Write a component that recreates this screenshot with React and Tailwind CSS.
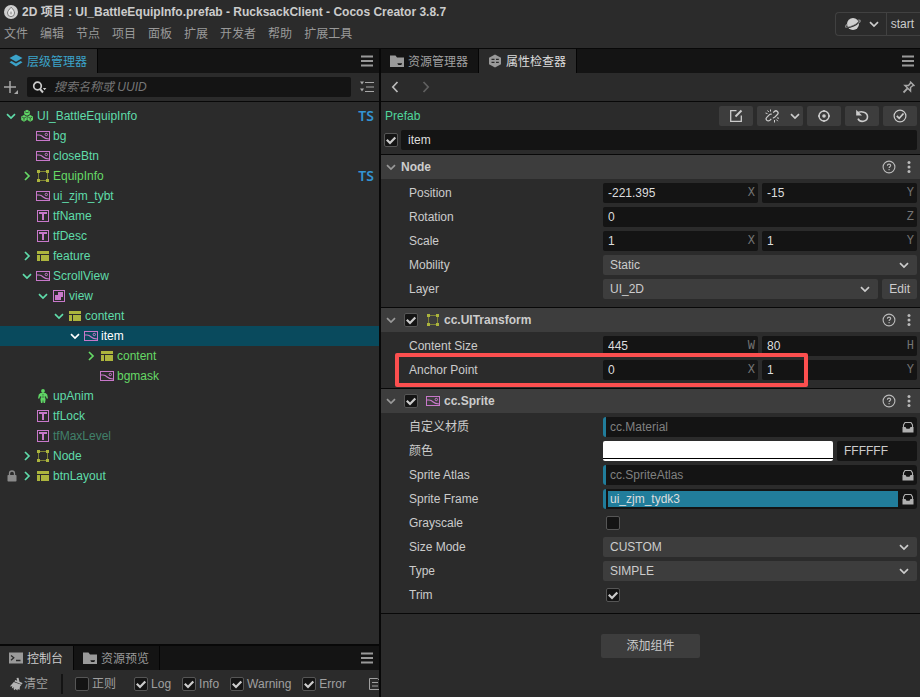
import React, { useState } from 'react';

const FONT = "font-['Liberation_Sans','Noto_Sans_CJK_SC',sans-serif]";

/* ---------- icons ---------- */

const Icon = ({ w = 14, h = 14, className = '', children }) => (
  <svg width={w} height={h} viewBox={`0 0 ${w} ${h}`} fill="none" className={`shrink-0 ${className}`} aria-hidden="true">
    {children}
  </svg>
);

const Chevron = ({ dir = 'down', className = '' }) => (
  <Icon className={className}>
    <path
      d={dir === 'down' ? 'M3 5.2 7 9 11 5.2' : dir === 'right' ? 'M5 3 9 7 5 11' : 'M9.5 2 4.8 7 9.5 12'}
      stroke="currentColor"
      strokeWidth="1.7"
    />
  </Icon>
);

const MenuIcon = () => (
  <Icon w={12} h={12}>
    <path d="M0 1.500h12M0 6h12M0 10.500h12" stroke="currentColor" strokeWidth="1.800" />
  </Icon>
);

const SpriteIcon = () => (
  <Icon className="text-[#c878ca]">
    <rect x=".5" y="2.500" width="13" height="9" stroke="currentColor" />
    <path d="M1 6h2c2.200 0 2.800.6 4.200 2s3 1.900 5.800 2" stroke="currentColor" strokeWidth="1.100" />
    <circle cx="10.300" cy="5.500" r="1.200" stroke="currentColor" />
  </Icon>
);

const LabelIcon = () => (
  <Icon className="text-[#c878ca]">
    <rect x="1.500" y="1.500" width="11" height="11" stroke="currentColor" />
    <path d="M3 4h8M7 4v7" stroke="currentColor" strokeWidth="2" />
  </Icon>
);

const TransformIcon = () => (
  <Icon className="text-[#acb53d]">
    <rect x="2.500" y="2.500" width="9" height="9" stroke="#7d8235" />
    <path d="M1 1h3v3H1zM10 1h3v3h-3zM1 10h3v3H1zM10 10h3v3h-3z" fill="currentColor" />
  </Icon>
);

const LayoutIcon = () => (
  <Icon className="text-[#acb53d]">
    <path d="M1 2h12v3H1zM1 6h3v6H1zM5 6h8v6H5z" fill="currentColor" />
  </Icon>
);

const MaskIcon = () => (
  <Icon className="text-[#c878ca]">
    <rect x="1.500" y="1.500" width="11" height="11" stroke="currentColor" />
    <path d="M6 3h5v5H9v3H3V6h3z" fill="currentColor" />
  </Icon>
);

const PrefabIcon = () => (
  <Icon className="text-[#5fd765]">
    <path d="m7 .8 2.800 1.500v3L7 6.800 4.200 5.300v-3z" fill="currentColor" />
    <path d="m4 6 2.800 1.500v3.500L4 12.800 1.200 11V7.500z" fill="currentColor" />
    <path d="m10.200 6 2.800 1.500v3.500l-2.800 1.800L7.400 11V7.500z" fill="currentColor" />
    <path d="m2 8 2 1.100L6 8M4 9.100v2.500M8.200 8l2 1.100 2-1.100M10.200 9.100v2.500M5 2.800l2 1 2-1" stroke="#2b2b2b" strokeWidth=".7" />
  </Icon>
);

const AnimIcon = () => (
  <Icon className="text-[#5fd765]">
    <circle cx="7" cy="2" r="1.900" fill="currentColor" />
    <path d="M4.500 4h5l1.700 1.500L12 9.500h-1.400L9.800 7 9 8l.6 2.500L9 14H7.600L7 10.500 6.400 14H5l-.6-3.500L5 8l-.8-1-.8 2.500H2l.8-4z" fill="currentColor" />
    <path d="M7 5v1.500M5.500 8h3" stroke="#2b2b2b" strokeWidth=".6" />
  </Icon>
);

const LockIcon = () => (
  <Icon w={10} h={12} className="text-[#8a8a8a]">
    <rect x=".5" y="5" width="9" height="6.500" rx=".8" fill="currentColor" />
    <path d="M2.500 5.500V3.500a2.500 2.500 0 0 1 5 0v2" stroke="currentColor" strokeWidth="1.300" />
  </Icon>
);

const LayersIcon = () => (
  <Icon>
    <path d="m7 .5 6.500 3.600L7 7.700.5 4.100z" fill="currentColor" />
    <path d="M2.500 7 .5 8.300 7 12.500l6.500-4.200L11.500 7 7 9.600z" fill="currentColor" />
  </Icon>
);

const FolderIcon = () => (
  <Icon className="text-[#9a9a9a]">
    <path d="M0 1.500h5.500L7 3.500h7V13H0z" fill="currentColor" />
    <path d="M7.500 9.200h4.500v.8l-1 1H8.500l-1-1z" fill="#141414" />
  </Icon>
);

const HexIcon = () => (
  <Icon>
    <path d="m7 .5 6 3.300v6.400l-6 3.300-6-3.300V3.800z" fill="#9a9a9a" />
    <path d="M3.500 5.300h3M8 5.300h2.800M3.500 8.300h3M8 8.300h2.800" stroke="#2b2b2b" strokeWidth="1.300" />
  </Icon>
);

const ConsoleIcon = () => (
  <Icon>
    <path d="M0 1.500h14v11H0z" fill="#9a9a9a" />
    <path d="m2 4.500 2.800 2.300L2 9.200M7 9.500h4.500" stroke="#2b2b2b" strokeWidth="1.300" />
  </Icon>
);

const CocosIcon = () => (
  <Icon>
    <circle cx="7" cy="7" r="7" fill="#cfcfcf" />
    <path d="M7.200 2.200c2 2.300 3.300 3.900 3.300 5.800A3.500 3.500 0 0 1 7 11.600 3.500 3.500 0 0 1 3.500 8c0-1.800 1.700-3.600 3.700-5.800z" stroke="#777" strokeWidth="1" fill="#e8e8e8" />
    <path d="M7 6c1 1.100 1.300 1.600 1.300 2.300a1.300 1.300 0 0 1-2.600 0C5.700 7.600 6.200 7 7 6z" fill="#b0b0b0" />
  </Icon>
);

const PlanetIcon = () => (
  <Icon w={16} h={14} className="text-[#d0d0d0]">
    <circle cx="8" cy="7" r="6" fill="currentColor" />
    <path d="M2 10.800C6 10.600 11.500 8 14 5" stroke="#2b2b2b" strokeWidth="1.300" />
    <path d="M2.200 7.300C.3 8.800 0 10.300 1.600 10.400M13.200 3.200c2.600-.3 2.600 1 .8 2.600" stroke="#8a8a8a" strokeWidth="1.200" />
    <path d="M1.500 10.300C5.500 10 11.500 7.300 14.200 4.600" stroke="#8a8a8a" strokeWidth=".6" />
  </Icon>
);

const HelpIcon = () => (
  <Icon>
    <circle cx="7" cy="7" r="5.900" stroke="currentColor" strokeWidth="1.100" />
    <path d="M5.400 5.700c0-2.100 3.300-2.100 3.300-.1 0 1.200-1.600 1.200-1.600 2.500M7.100 9v1.200" stroke="currentColor" strokeWidth="1.100" />
  </Icon>
);

const DotsIcon = () => (
  <Icon w={4} h={14}>
    <circle cx="2" cy="2.500" r="1.500" fill="currentColor" />
    <circle cx="2" cy="7" r="1.500" fill="currentColor" />
    <circle cx="2" cy="11.500" r="1.500" fill="currentColor" />
  </Icon>
);

const PinIcon = () => (
  <Icon>
    <path d="m8 1.500 4.500 4.500M9 2.500 6.500 5.500 3 5.500l5.500 5.500V7.500L11.500 5" stroke="currentColor" strokeWidth="1.500" />
    <path d="M5.800 8.200 1.500 12.500" stroke="currentColor" strokeWidth="1.800" />
  </Icon>
);

const AssetIcon = () => (
  <Icon w={12} h={12} className="text-[#b0b0b0]">
    <path d="M1.500 6.500v-2.500L3 1.500h6l1.500 2.500v2.500" stroke="currentColor" strokeWidth="1.100" />
    <path d="M.5 6h3l1 1.800h3l1-1.800h3v5.500H.5z" fill="currentColor" />
  </Icon>
);

const EditIcon = () => (
  <Icon>
    <path d="M7.500 1.700H1.700v10.600h10.600V6.500" stroke="currentColor" strokeWidth="1.300" />
    <path d="m6.500 7.500 6-6" stroke="currentColor" strokeWidth="2" />
  </Icon>
);

const UnlinkIcon = () => (
  <Icon>
    <path d="m6.300 9.800-1.500 1.500a2.100 2.100 0 0 1-3-3L4.500 5.600a2 2 0 0 1 2.300-.3M8.200 3.700l1.200-1.200a2.100 2.100 0 0 1 3 3L9.800 8.200a2 2 0 0 1-2 .5" stroke="currentColor" strokeWidth="1.200" />
    <path d="M2.500 1.500 3.800 3M5.500.5v2M.5 4l2 .6M9.500 11v2.500M11.300 10.500l1.500 1.700M12 8.800l2 .5" stroke="currentColor" />
  </Icon>
);

const TargetIcon = () => (
  <Icon>
    <circle cx="7" cy="7" r="5" stroke="currentColor" strokeWidth="1.400" />
    <circle cx="7" cy="7" r="1.800" fill="currentColor" />
    <path d="M7 1v2M7 11v2M1 7h2M11 7h2" stroke="currentColor" strokeWidth="1.500" />
  </Icon>
);

const ResetIcon = () => (
  <Icon>
    <path d="M2 4.200c4-2.800 10.500-1 10.500 3.600 0 5-7.500 6.300-9.500 1.900" stroke="currentColor" strokeWidth="1.600" />
    <path d="M1.200.8v5.700H7z" fill="currentColor" />
  </Icon>
);

const ApplyIcon = () => (
  <Icon>
    <circle cx="7" cy="7" r="5.900" stroke="currentColor" strokeWidth="1.200" />
    <path d="m3.800 6.800 2.400 2.500 4.300-4.800" stroke="currentColor" strokeWidth="1.700" />
  </Icon>
);

const BroomIcon = () => (
  <Icon className="text-[#b5b5b5]">
    <path d="M7.500 1 9.500.7l1 4 3 1.200-.6 1.500L5.500 4.500l.7-1.500 2 .7z" fill="currentColor" />
    <path d="m4.800 5 7.600 2.800-1.400 1.600-.5 3.600-1.600-1-.6 1.600-1.700-1.500-1 1.200L4.500 12l.6-1.700-2.300 1.200.5-2.200L.8 9.500z" fill="currentColor" />
  </Icon>
);

/* ---------- shared controls ---------- */

function Checkbox({ id, label, defaultChecked = false }) {
  return (
    <span className="relative flex size-[14px] shrink-0">
      <input
        id={id}
        type="checkbox"
        aria-label={label}
        defaultChecked={defaultChecked}
        className="peer size-[14px] appearance-none rounded-[2px] border border-[#565656] bg-[#141414]"
      />
      <svg viewBox="0 0 14 14" fill="none" className="pointer-events-none absolute inset-0 hidden text-[#cccccc] peer-checked:block">
        <path d="m2.800 6.800 3.200 3.200L11.300 4.500" stroke="currentColor" strokeWidth="2.200" />
      </svg>
    </span>
  );
}

function Tab({ icon, active = false, className = '', children }) {
  return (
    <button
      type="button"
      className={`flex h-6 items-center gap-1 border-r border-[#050505] pr-[10px] pl-[9px] whitespace-nowrap ${active ? 'bg-[#2b2b2b]' : 'bg-[#141414]'} ${className}`}
    >
      {icon}
      <span className="pt-px">{children}</span>
    </button>
  );
}

function TabBar({ children }) {
  return (
    <div className="flex h-6 shrink-0 items-center bg-[#141414]">
      {children}
      <button type="button" aria-label="Panel menu" className="mr-[6px] ml-auto text-[#999999]">
        <MenuIcon />
      </button>
    </div>
  );
}

function Field({ label, value, axis }) {
  return (
    <div className="flex h-5 min-w-0 flex-1 items-center rounded-[2px] bg-[#141414] pr-[3px]">
      <input aria-label={label} defaultValue={value} className="w-0 min-w-0 flex-1 bg-transparent pl-[5px] text-[#dddddd] outline-none" />
      <span className="font-['Liberation_Mono',monospace] text-[#757575]">{axis}</span>
    </div>
  );
}

function Select({ id, options }) {
  return (
    <div className="relative min-w-0 flex-1">
      <select id={id} className="block h-5 w-full appearance-none rounded-[2px] bg-[#3d3d3d] pr-6 pl-[7px] text-[#cccccc] outline-none">
        {options.map(o => <option key={o}>{o}</option>)}
      </select>
      <Chevron className="pointer-events-none absolute top-[3px] right-[6px] text-[#cccccc]" />
    </div>
  );
}

function AssetField({ id, type, value }) {
  return (
    <div className="flex h-5 min-w-0 flex-1 items-center rounded-[3px] border-l-3 border-[#217d9b] bg-[#141414] pr-[3px] pl-[2px]">
      <input
        id={id}
        readOnly
        defaultValue={value}
        placeholder={type}
        className={`h-4 min-w-0 flex-1 px-[2px] outline-none placeholder:text-[#808080] ${value ? 'bg-[#217d9b] text-[#dddddd]' : 'bg-transparent'}`}
      />
      <button type="button" aria-label={`Select ${type}`} className="ml-1">
        <AssetIcon />
      </button>
    </div>
  );
}

function Row({ label, htmlFor, highlighted = false, children }) {
  return (
    <div className="relative grid h-5 grid-cols-[194fr_314fr] items-center pr-[3px] pl-7">
      {htmlFor ? <label htmlFor={htmlFor}>{label}</label> : <span>{label}</span>}
      <div className="flex min-w-0 items-center gap-1">{children}</div>
      {highlighted && (
        <div className="pointer-events-none absolute -inset-y-[7px] right-28 left-[14px] rounded-[2px] border-4 border-[#fc4f4f]" />
      )}
    </div>
  );
}

function Section({ title, icon, toggle = false, children }) {
  const [open, setOpen] = useState(true);
  return (
    <section className="border-b border-[#080808]">
      <header className="flex h-6 items-center bg-[#3d3d3d] pr-[9px] pl-[3px]">
        <button type="button" aria-label={`Toggle ${title}`} onClick={() => setOpen(!open)} className="mr-[3px] text-[#999999]">
          <Chevron dir={open ? 'down' : 'right'} />
        </button>
        {toggle && (
          <div className="mr-1 ml-[3px] flex items-center gap-2">
            <Checkbox label={`Enable ${title}`} defaultChecked />
            {icon}
          </div>
        )}
        <h2 className="font-bold">{title}</h2>
        <div className="ml-auto flex items-center gap-[11px] text-[#bbbbbb]">
          <button type="button" aria-label="Help"><HelpIcon /></button>
          <button type="button" aria-label="More"><DotsIcon /></button>
        </div>
      </header>
      {open && <div className="flex flex-col gap-1 pt-1 pb-2">{children}</div>}
    </section>
  );
}

/* ---------- hierarchy ---------- */

const nodes = [
  { name: 'UI_BattleEquipInfo', level: 0, icon: PrefabIcon, arrow: 'down', ts: true },
  { name: 'bg', level: 1, icon: SpriteIcon },
  { name: 'closeBtn', level: 1, icon: SpriteIcon },
  { name: 'EquipInfo', level: 1, icon: TransformIcon, arrow: 'right', tone: 'green', ts: true },
  { name: 'ui_zjm_tybt', level: 1, icon: SpriteIcon },
  { name: 'tfName', level: 1, icon: LabelIcon },
  { name: 'tfDesc', level: 1, icon: LabelIcon },
  { name: 'feature', level: 1, icon: LayoutIcon, arrow: 'right' },
  { name: 'ScrollView', level: 1, icon: SpriteIcon, arrow: 'down' },
  { name: 'view', level: 2, icon: MaskIcon, arrow: 'down' },
  { name: 'content', level: 3, icon: LayoutIcon, arrow: 'down' },
  { name: 'item', level: 4, icon: SpriteIcon, arrow: 'down', tone: 'selected' },
  { name: 'content', level: 5, icon: LayoutIcon, arrow: 'right', tone: 'green' },
  { name: 'bgmask', level: 5, icon: SpriteIcon, tone: 'green' },
  { name: 'upAnim', level: 1, icon: AnimIcon },
  { name: 'tfLock', level: 1, icon: LabelIcon },
  { name: 'tfMaxLevel', level: 1, icon: LabelIcon, tone: 'dim' },
  { name: 'Node', level: 1, icon: TransformIcon, arrow: 'right' },
  { name: 'btnLayout', level: 1, icon: LayoutIcon, arrow: 'right', locked: true },
];

const tones = {
  teal: 'text-[#5fdcaa]',
  green: 'text-[#66d966]',
  dim: 'text-[#41806a]',
  selected: 'bg-[#094a5d] text-white',
};

function TreeRow({ node }) {
  const NodeIcon = node.icon;
  return (
    <li className={`flex h-5 items-center pr-[5px] pl-1 ${tones[node.tone || 'teal']}`}>
      {Array.from({ length: node.level }, (_, i) => (
        <span key={i} className="flex w-4 shrink-0 justify-center">
          {i === 0 && node.locked && <LockIcon />}
        </span>
      ))}
      <span className="mr-[2px] w-[14px] shrink-0">{node.arrow && <Chevron dir={node.arrow} />}</span>
      <NodeIcon />
      <span className="ml-[3px]">{node.name}</span>
      {node.ts && <span className="ml-auto font-['Noto_Sans',sans-serif] text-sm font-semibold text-[#3393d3]">TS</span>}
    </li>
  );
}

function Hierarchy() {
  return (
    <section className="flex min-h-0 flex-1 flex-col">
      <TabBar>
        <Tab active icon={<LayersIcon />} className="text-[#3ba3c9]">层级管理器</Tab>
      </TabBar>
      <div className="flex h-[29px] shrink-0 items-center border-b border-[#080808] pr-[5px] pl-1 text-[#a8a8a8]">
        <button type="button" aria-label="Create node">
          <Icon>
            <path d="M6 1v12M0 7h12" stroke="currentColor" strokeWidth="1.500" />
            <path d="M14 10v4h-4z" fill="currentColor" />
          </Icon>
        </button>
        <div className="mr-[9px] ml-[9px] flex h-5 min-w-0 flex-1 items-center rounded-[2px] bg-[#141414] pl-[5px]">
          <Icon w={16} className="text-[#cccccc]">
            <circle cx="5.500" cy="6" r="3.800" stroke="currentColor" strokeWidth="1.700" />
            <path d="m8 9 3 3.500" stroke="currentColor" strokeWidth="2" />
            <path d="M10.800 8h3.600L12.600 10.200z" fill="currentColor" />
          </Icon>
          <input
            aria-label="搜索"
            placeholder="搜索名称或 UUID"
            className="ml-[6px] min-w-0 flex-1 bg-transparent outline-none placeholder:text-[#767676] placeholder:italic"
          />
        </div>
        <button type="button" aria-label="Collapse all">
          <Icon>
            <path d="M5 2.500h9M6 7h8M5 11.500h9" stroke="currentColor" strokeWidth="1.200" />
            <path d="M0 1.500h4L2 4.500zM0 8.500h4l-2 3z" fill="currentColor" />
          </Icon>
        </button>
      </div>
      <ul className="min-h-0 flex-1 overflow-hidden pt-1">
        {nodes.map((n, i) => <TreeRow key={i} node={n} />)}
      </ul>
    </section>
  );
}

function Console() {
  return (
    <section className="shrink-0 border-t-2 border-[#080808]">
      <TabBar>
        <Tab active icon={<ConsoleIcon />} className="text-[#cccccc]">控制台</Tab>
        <Tab icon={<FolderIcon />} className="text-[#999999]">资源预览</Tab>
      </TabBar>
      <div className="flex h-[27px] items-center overflow-hidden pl-[9px] whitespace-nowrap text-[#a0a0a0]">
        <button type="button" className="flex items-center gap-[1px]">
          <BroomIcon />
          <span className="pt-px">清空</span>
        </button>
        <div className="mr-3 ml-[13px] h-5 w-[2px] shrink-0 bg-[#141414]" />
        <div className="mr-[18px] flex items-center gap-[3px]">
          <Checkbox id="regex" />
          <label htmlFor="regex">正则</label>
        </div>
        <div className="flex items-center gap-[11px]">
          {['Log', 'Info', 'Warning', 'Error'].map(name => (
            <div key={name} className="flex items-center gap-[3px]">
              <Checkbox id={name} defaultChecked />
              <label htmlFor={name}>{name}</label>
            </div>
          ))}
        </div>
        <button type="button" aria-label="Log file" className="ml-[22px] shrink-0">
          <Icon>
            <path d="M1.500 1.500h8L12.500 4v8.500h-11zM4 5.500h6M4 9h6" stroke="currentColor" />
          </Icon>
        </button>
      </div>
    </section>
  );
}

/* ---------- inspector ---------- */

const toolButton = 'flex h-5 w-[34px] items-center justify-center rounded-[2px] bg-[#3d3d3d]';

function Inspector() {
  return (
    <main className="flex min-h-0 min-w-0 flex-col border-l border-[#080808]">
      <TabBar>
        <Tab icon={<FolderIcon />} className="text-[#a0a0a0]">资源管理器</Tab>
        <Tab active icon={<HexIcon />} className="text-[#dddddd]">属性检查器</Tab>
      </TabBar>

      <div className="flex h-[29px] shrink-0 items-center border-b border-[#080808] pr-1 pl-[7px]">
        <button type="button" aria-label="Back" className="text-[#bbbbbb]"><Chevron dir="left" /></button>
        <button type="button" aria-label="Forward" disabled className="ml-[17px] text-[#606060]"><Chevron dir="left" className="rotate-180" /></button>
        <button type="button" aria-label="Pin" className="ml-auto text-[#a8a8a8]"><PinIcon /></button>
      </div>

      <div className="flex flex-col gap-1 border-b border-[#080808] pt-1 pr-[3px] pb-1 pl-[3px]">
        <div className="flex h-5 items-center gap-1 text-[#cccccc]">
          <span className="mr-auto pl-[1px] text-[#4fd69c]">Prefab</span>
          <button type="button" aria-label="Edit prefab" className={toolButton}><EditIcon /></button>
          <button type="button" aria-label="Unlink prefab" className="flex h-5 w-[46px] items-center justify-between rounded-[2px] bg-[#3d3d3d] pr-[1px] pl-2">
            <UnlinkIcon />
            <Chevron />
          </button>
          <button type="button" aria-label="Locate" className={toolButton}><TargetIcon /></button>
          <button type="button" aria-label="Reset" className={toolButton}><ResetIcon /></button>
          <button type="button" aria-label="Apply" className={toolButton}><ApplyIcon /></button>
        </div>
        <div className="flex h-5 items-center gap-[3px]">
          <Checkbox label="Active" defaultChecked />
          <input aria-label="Node name" defaultValue="item" className="h-5 min-w-0 flex-1 rounded-[2px] bg-[#141414] px-[7px] text-[#dddddd] outline-none" />
        </div>
      </div>

      <Section title="Node">
        <Row label="Position">
          <Field label="Position X" value="-221.395" axis="X" />
          <Field label="Position Y" value="-15" axis="Y" />
        </Row>
        <Row label="Rotation">
          <Field label="Rotation Z" value="0" axis="Z" />
        </Row>
        <Row label="Scale">
          <Field label="Scale X" value="1" axis="X" />
          <Field label="Scale Y" value="1" axis="Y" />
        </Row>
        <Row label="Mobility" htmlFor="mobility">
          <Select id="mobility" options={['Static']} />
        </Row>
        <Row label="Layer" htmlFor="layer">
          <Select id="layer" options={['UI_2D']} />
          <button type="button" className="h-5 rounded-[2px] bg-[#3d3d3d] px-[7px]">Edit</button>
        </Row>
      </Section>

      <Section title="cc.UITransform" icon={<TransformIcon />} toggle>
        <Row label="Content Size">
          <Field label="Content width" value="445" axis="W" />
          <Field label="Content height" value="80" axis="H" />
        </Row>
        <Row label="Anchor Point" highlighted>
          <Field label="Anchor X" value="0" axis="X" />
          <Field label="Anchor Y" value="1" axis="Y" />
        </Row>
      </Section>

      <Section title="cc.Sprite" icon={<SpriteIcon />} toggle>
        <Row label="自定义材质" htmlFor="material">
          <AssetField id="material" type="cc.Material" />
        </Row>
        <Row label="颜色" htmlFor="color">
          <button type="button" aria-label="Pick color" className="flex h-5 min-w-0 flex-1 flex-col justify-end rounded-[2px] bg-white pb-[2px]">
            <span className="block h-px w-full bg-black" />
          </button>
          <input id="color" defaultValue="FFFFFF" className="h-5 w-20 rounded-[2px] bg-[#141414] px-[7px] outline-none" />
        </Row>
        <Row label="Sprite Atlas" htmlFor="atlas">
          <AssetField id="atlas" type="cc.SpriteAtlas" />
        </Row>
        <Row label="Sprite Frame" htmlFor="frame">
          <AssetField id="frame" type="cc.SpriteFrame" value="ui_zjm_tydk3" />
        </Row>
        <Row label="Grayscale" htmlFor="grayscale">
          <div className="pl-[3px]"><Checkbox id="grayscale" /></div>
        </Row>
        <Row label="Size Mode" htmlFor="sizeMode">
          <Select id="sizeMode" options={['CUSTOM']} />
        </Row>
        <Row label="Type" htmlFor="type">
          <Select id="type" options={['SIMPLE']} />
        </Row>
        <Row label="Trim" htmlFor="trim">
          <div className="pl-[3px]"><Checkbox id="trim" defaultChecked /></div>
        </Row>
      </Section>

      <button type="button" className="mt-5 h-6 self-center rounded-[2px] bg-[#3d3d3d] px-[25px]">添加组件</button>
    </main>
  );
}

/* ---------- app ---------- */

const menus = ['文件', '编辑', '节点', '项目', '面板', '扩展', '开发者', '帮助', '扩展工具'];

export default function App() {
  return (
    <div className={`flex h-screen flex-col overflow-hidden bg-[#2b2b2b] text-xs text-[#cccccc] ${FONT}`}>
      <header className="flex h-[49px] shrink-0 justify-between border-b border-[#080808]">
        <div className="flex flex-col gap-[5px] pt-1 pl-1">
          <div className="flex h-4 items-center gap-1">
            <CocosIcon />
            <h1 className="font-bold whitespace-nowrap">2D 项目 : UI_BattleEquipInfo.prefab - RucksackClient - Cocos Creator 3.8.7</h1>
          </div>
          <nav className="flex h-[18px] items-center gap-3 text-[#999999]">
            {menus.map(m => <button key={m} type="button" className="whitespace-nowrap">{m}</button>)}
          </nav>
        </div>
        <div className="mt-3 flex h-6 rounded-l border border-r-0 border-[#414141]">
          <button type="button" aria-label="Preview platform" className="flex items-center gap-[6px] border-r border-[#414141] pr-[5px] pl-[9px]">
            <PlanetIcon />
            <Chevron />
          </button>
          <button type="button" className="pr-[6px] pl-1">start</button>
        </div>
      </header>

      <div className="grid min-h-0 flex-1 grid-cols-[19fr_27fr]">
        <aside className="flex min-h-0 min-w-0 flex-col border-r border-[#080808]">
          <Hierarchy />
          <Console />
        </aside>
        <Inspector />
      </div>
    </div>
  );
}
